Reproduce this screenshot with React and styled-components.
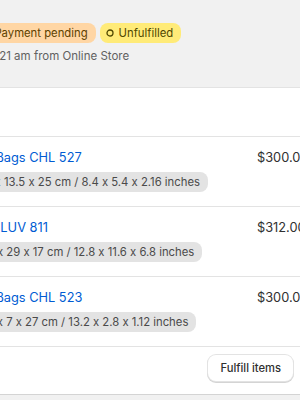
import React from 'react';
import styled, { createGlobalStyle } from 'styled-components';

const GlobalStyle = createGlobalStyle`
  html, body {
    margin: 0;
    padding: 0;
    overflow: hidden;
    background: #f1f1f1;
  }
  body {
    font-family: Inter, "Noto Sans", sans-serif;
    font-feature-settings: "calt" 0;
    color: #303030;
    -webkit-font-smoothing: antialiased;
  }
`;

const Page = styled.div`
  width: 415px;
  margin-left: -106px;
  padding-top: 21px;
`;

const Header = styled.header`
  display: flex;
  gap: 8px;
  padding: 0 0 21px 0;
`;

const BackButton = styled.div`
  width: 36px;
  height: 28px;
  flex-shrink: 0;
`;

const HeaderText = styled.div`
  display: flex;
  flex-direction: column;
  gap: 1px;
`;

const TitleRow = styled.div`
  display: flex;
  align-items: center;
  gap: 4px;
  height: 24px;
`;

const OrderTitle = styled.h1`
  margin: 0;
  font-size: 14.5px;
  font-weight: 700;
  line-height: 24px;
  white-space: nowrap;
`;

const Badge = styled.span`
  display: inline-flex;
  align-items: center;
  gap: 5px;
  height: 20px;
  padding: 0 8px 0 ${p => (p.$icon ? '6px' : '8px')};
  border-radius: 8px;
  font-size: 11.3px;
  font-weight: 400;
  white-space: nowrap;
  background: ${p => p.$bg};
  color: ${p => p.$fg};
`;

const Subtitle = styled.div`
  font-size: 11.5px;
  line-height: 20px;
  color: #616161;
  white-space: nowrap;
`;

const Card = styled.section`
  background: #ffffff;
  box-shadow: inset 0 1px 0 #e3e3e3, inset 0 -1px 0 #d4d4d4;
`;

const CardHeader = styled.div`
  height: 49px;
  padding: 0 16px;
  display: flex;
  align-items: center;
  font-size: 12.5px;
  font-weight: 600;
  color: #303030;
`;

const Row = styled.div`
  display: grid;
  grid-template-columns: 40px 1fr 52px;
  column-gap: 12px;
  padding: 11px 0 14px 16px;
  border-top: 1px solid #e3e3e3;
`;

const Thumb = styled.div`
  width: 40px;
  height: 40px;
  border-radius: 8px;
  background: #e8e8e8;
`;

const ItemInfo = styled.div`
  display: flex;
  flex-direction: column;
  align-items: flex-start;
  gap: 4px;
  min-width: 0;
`;

const ItemTitle = styled.a`
  font-size: 12.8px;
  line-height: 20px;
  color: #005bd3;
  text-decoration: none;
  white-space: nowrap;
`;

const SizeBadge = styled.span`
  display: inline-flex;
  align-items: center;
  height: 20px;
  padding: 0 8px;
  border-radius: 8px;
  background: #e3e3e3;
  color: #4a4a4a;
  font-size: 11.3px;
  white-space: nowrap;
`;

const Price = styled.div`
  font-size: 12.8px;
  line-height: 20px;
  color: #303030;
  white-space: nowrap;
`;

const Footer = styled.div`
  display: flex;
  justify-content: flex-end;
  padding: 8px 16px 14px;
  border-top: 1px solid #e3e3e3;
`;

const Button = styled.button`
  height: 26px;
  padding: 0 12px;
  border-radius: 8px;
  border: none;
  background: #ffffff;
  box-shadow: 0 0 0 1px #e3e3e3, 0 1px 0 1px #d4d4d4;
  font-family: inherit;
  font-size: 11.2px;
  font-weight: 500;
  color: #303030;
`;

const Circle = () => (
  <svg width="8" height="8" viewBox="0 0 8 8">
    <circle cx="4" cy="4" r="3" fill="none" stroke="currentColor" strokeWidth="1.3" />
  </svg>
);

const items = [
  { title: 'Sling Bags CHL 527', size: '21.3 x 13.5 x 25 cm / 8.4 x 5.4 x 2.16 inches', price: '$300.00' },
  { title: 'Purse LUV 811', size: '32.5 x 29 x 17 cm / 12.8 x 11.6 x 6.8 inches', price: '$312.00' },
  { title: 'Sling Bags CHL 523', size: '33.5 x 7 x 27 cm / 13.2 x 2.8 x 1.12 inches', price: '$300.00' },
];

export default function App() {
  return (
    <>
      <GlobalStyle />
      <Page>
        <Header>
          <BackButton />
          <HeaderText>
            <TitleRow>
              <OrderTitle>#1042</OrderTitle>
              <Badge $bg="#ffd6a4" $fg="#5e4200">Payment pending</Badge>
              <Badge $icon $bg="#ffeb78" $fg="#4f4700"><Circle />Unfulfilled</Badge>
            </TitleRow>
            <Subtitle>Mar 4 at 11:21 am from Online Store</Subtitle>
          </HeaderText>
        </Header>
        <Card>
          <CardHeader>Unfulfilled</CardHeader>
          {items.map(item => (
            <Row key={item.title}>
              <Thumb />
              <ItemInfo>
                <ItemTitle href="#">{item.title}</ItemTitle>
                <SizeBadge>{item.size}</SizeBadge>
              </ItemInfo>
              <Price>{item.price}</Price>
            </Row>
          ))}
          <Footer>
            <Button>Fulfill items</Button>
          </Footer>
        </Card>
      </Page>
    </>
  );
}
